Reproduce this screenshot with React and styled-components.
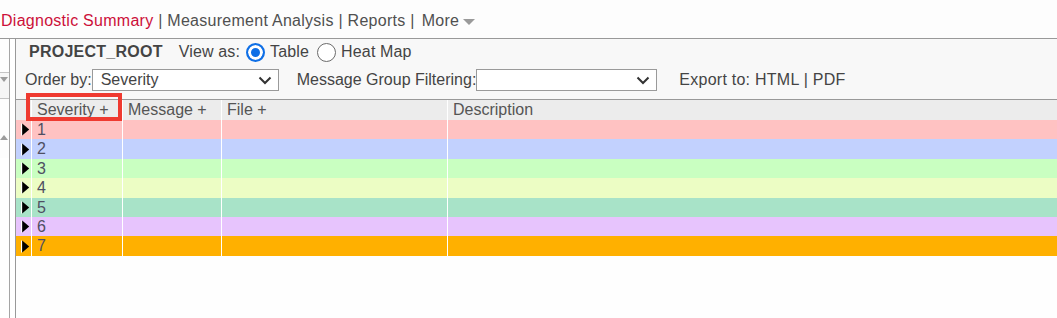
import React from 'react';
import styled, { createGlobalStyle } from 'styled-components';

const GlobalStyle = createGlobalStyle`
	html, body {
		margin: 0;
		padding: 0;
		background: #fff;
		font-family: "Liberation Sans", Arial, sans-serif;
	}
`;

const Page = styled.div`
	display: flex;
	flex-direction: column;
	min-height: 100vh;
	overflow: hidden;
`;

const Nav = styled.nav`
	box-sizing: border-box;
	height: 39px;
	padding: 11px 0 0 1px;
	border-bottom: 1px solid #999;
	background: #fdfdfd;
	font-size: 16px;
	line-height: 20px;
	letter-spacing: 0.27px;
	color: #505050;
	white-space: nowrap;
	display: flex;
	align-items: flex-start;
`;

const NavLink = styled.span`
	color: ${(props) => (props.active ? '#cc1039' : '#505050')};
`;

const More = styled.span`
	margin-left: 7px;
	display: inline-flex;
	align-items: center;
	gap: 4px;
`;

const Caret = styled.span`
	display: inline-block;
	width: 0;
	height: 0;
	border-left: 6px solid transparent;
	border-right: 6px solid transparent;
	border-top: 6px solid #9a9a9a;
	margin-top: 1px;
`;

const Body = styled.div`
	flex: 1;
	display: flex;
`;

const SideStrip = styled.div`
	width: 9px;
	border-right: 1px solid #a5a5a5;
	display: flex;
	flex-direction: column;
	overflow: hidden;
`;

const SideBlock = styled.div`
	box-sizing: border-box;
	height: ${(props) => props.h};
	border-top: ${(props) => (props.line ? '1px solid #c4c4c4' : 'none')};
	background: ${(props) => props.bg || '#fdfdfd'};
	padding-top: ${(props) => props.pt || '0px'};
	display: flex;
	justify-content: flex-end;
	align-items: flex-start;
`;

const SideArrow = styled.span`
	display: block;
	width: 0;
	height: 0;
	margin-right: 1px;
	border-left: 4px solid transparent;
	border-right: 4px solid transparent;
	${(props) => (props.up ? 'border-bottom: 5px solid #9c9c9c;' : 'border-top: 5px solid #9c9c9c;')}
`;

const Gutter = styled.div`
	width: 5px;
	background: #fff;
`;

const Main = styled.div`
	position: relative;
	flex: 1;
	border-left: 1px solid #999;
	background: #fefefe;
	display: flex;
	flex-direction: column;
`;

const Toolbar = styled.div`
	background: #f8f8f8;
	padding: 3px 0 8px;
	font-size: 16px;
	color: #444;
	white-space: nowrap;
`;

const ToolRow = styled.div`
	display: flex;
	align-items: center;
	height: ${(props) => props.h};
	line-height: ${(props) => props.h};
	padding-left: ${(props) => props.pl};
	margin-top: ${(props) => props.mt || '0px'};
	letter-spacing: ${(props) => props.ls || '0px'};
`;

const Project = styled.b`
	font-weight: bold;
	letter-spacing: 0.25px;
	margin-right: 16px;
`;

const RadioLabel = styled.label`
	display: inline-flex;
	align-items: center;
	margin-left: ${(props) => props.ml};
	gap: 5px;
`;

const Radio = styled.input.attrs({ type: 'radio' })`
	appearance: none;
	margin: 0;
	box-sizing: border-box;
	width: 19px;
	height: 19px;
	border-radius: 50%;
	border: 1.5px solid #6b6b6b;
	background: #fff;

	&:checked {
		border: 2px solid #0f6fe6;
		background: #0f6fe6;
		box-shadow: inset 0 0 0 3px #fff;
	}
`;

const Select = styled.div`
	box-sizing: border-box;
	width: ${(props) => props.w};
	height: 22px;
	border: 1px solid #9a9a9a;
	background: #fff;
	display: flex;
	align-items: center;
	justify-content: space-between;
	padding: 0 6px 0 8px;
	line-height: 20px;
	color: #444;
`;

const Export = styled.span`
	margin-left: 22px;
	letter-spacing: 0.25px;
`;

const Spacer = styled.span`
	width: ${(props) => props.w};
`;

const Table = styled.div`
	border-top: 1px solid #999;
	font-size: 16px;
`;

const GridRow = styled.div`
	display: grid;
	grid-template-columns: 15px 90px 98px 225px 1fr;
	column-gap: 1px;
	background: #fff;
	height: ${(props) => props.h};
	line-height: ${(props) => props.h};
	color: ${(props) => props.ink};
`;

const Cell = styled.div`
	background: ${(props) => props.bg};
	padding-left: ${(props) => props.pl || '5px'};
	white-space: nowrap;
	overflow: hidden;
	display: flex;
	align-items: center;
`;

const Highlight = styled.div`
	position: absolute;
	left: 10px;
	top: 54px;
	width: 96px;
	height: 28px;
	box-sizing: border-box;
	border: 4px solid #ef3a30;
	pointer-events: none;
`;

const Chevron = () => (
	<svg width="14" height="9" viewBox="0 0 14 9">
		<polyline points="1.5,1.5 7,7 12.5,1.5" fill="none" stroke="#333" strokeWidth="2" />
	</svg>
);

const Expander = () => (
	<svg width="9" height="13" viewBox="0 0 9 13">
		<line x1="0.5" y1="0.5" x2="0.5" y2="12.5" stroke="#fff" strokeWidth="1" />
		<polygon points="1.2,0.5 8.2,6.5 1.2,12.5" fill="#000" />
	</svg>
);

const rowColors = ['#ffc2c2', '#c2d1fe', '#c9ffc1', '#ecfdc4', '#a8e3c8', '#e7c4fd', '#ffb000'];

export default function App() {
	return (
		<Page>
			<GlobalStyle />
			<Nav>
				<NavLink active>Diagnostic Summary</NavLink>
				&nbsp;|&nbsp;
				<NavLink>Measurement Analysis</NavLink>
				&nbsp;|&nbsp;
				<NavLink>Reports</NavLink>
				&nbsp;|
				<More>More<Caret /></More>
			</Nav>
			<Body>
				<SideStrip>
					<SideBlock h="33px" />
					<SideBlock h="26px" line bg="#f6f6f6" pt="4px"><SideArrow /></SideBlock>
					<SideBlock h="60px" line pt="36px"><SideArrow up /></SideBlock>
				</SideStrip>
				<Gutter />
				<Main>
					<Toolbar>
						<ToolRow h="20px" pl="13px" ls="0.15px">
							<Project>PROJECT_ROOT</Project>
							View as:
							<RadioLabel ml="6px"><Radio name="view" defaultChecked />Table</RadioLabel>
							<RadioLabel ml="8px"><Radio name="view" />Heat Map</RadioLabel>
						</ToolRow>
						<ToolRow h="22px" pl="9px" mt="7px">
							Order by:
							<Select w="187px">Severity<Chevron /></Select>
							<Spacer w="18px" />
							Message Group Filtering:
							<Select w="181px"><span /><Chevron /></Select>
							<Export>Export to: HTML | PDF</Export>
						</ToolRow>
					</Toolbar>
					<Table>
						<GridRow h="20px" ink="#555">
							<Cell bg="#ececec" />
							<Cell bg="#ececec">Severity +</Cell>
							<Cell bg="#ececec">Message +</Cell>
							<Cell bg="#ececec">File +</Cell>
							<Cell bg="#ececec">Description</Cell>
						</GridRow>
						{rowColors.map((c, i) => (
							<GridRow h="19.4px" ink="#4f4f62" key={i}>
								<Cell bg={c} pl="5px"><Expander /></Cell>
								<Cell bg={c}>{i + 1}</Cell>
								<Cell bg={c} />
								<Cell bg={c} />
								<Cell bg={c} />
							</GridRow>
						))}
					</Table>
					<Highlight />
				</Main>
			</Body>
		</Page>
	);
}
